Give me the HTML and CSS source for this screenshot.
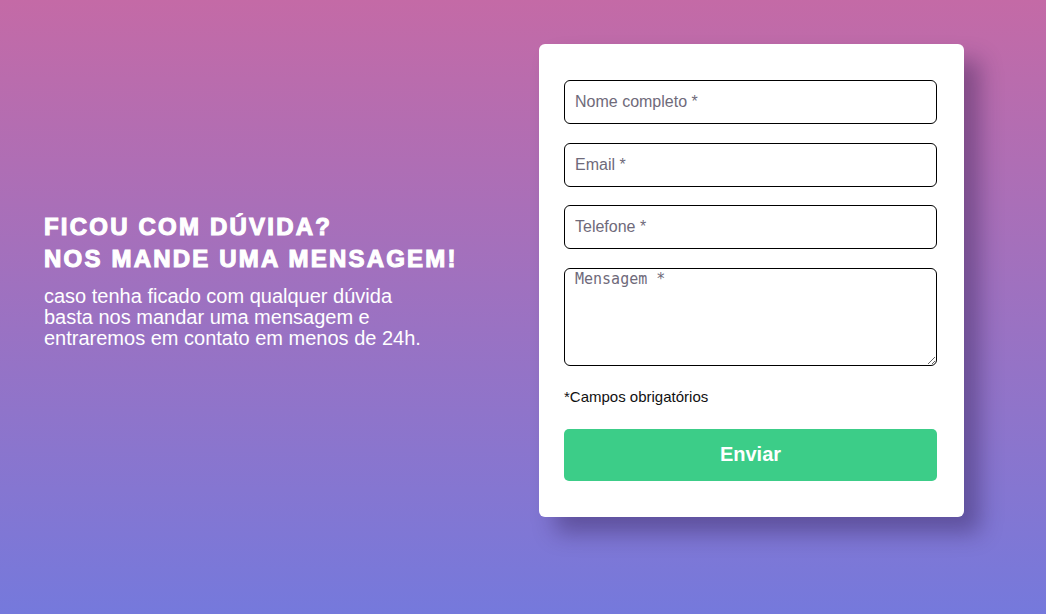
FILE: index.html
```html
<!DOCTYPE html>
<html lang="pt-BR">
<head>
<meta charset="utf-8">
<title>Contato</title>
<link rel="stylesheet" href="styles.css">
</head>
<body>
<main class="page">
  <section class="intro">
    <h1 class="intro-title">FICOU COM DÚVIDA?<br>NOS MANDE UMA MENSAGEM!</h1>
    <p class="intro-text">caso tenha ficado com qualquer dúvida<br>basta nos mandar uma mensagem e<br>entraremos em contato em menos de 24h.</p>
  </section>
  <form class="card">
    <input class="field" type="text" placeholder="Nome completo *">
    <input class="field" type="email" placeholder="Email *">
    <input class="field" type="tel" placeholder="Telefone *">
    <textarea class="field field-area" placeholder="Mensagem *"></textarea>
    <p class="note">*Campos obrigatórios</p>
    <button class="submit" type="button">Enviar</button>
  </form>
</main>
</body>
</html>
```

FILE: styles.css
```css
* { box-sizing: border-box; }

html, body {
  margin: 0;
  height: 100%;
}

body {
  background: linear-gradient(to bottom, #c46aa6 0%, #7579dc 100%);
  font-family: "Liberation Sans", Arial, sans-serif;
  overflow: hidden;
}

.page {
  display: grid;
  grid-template-columns: 495px 425px;
  align-items: center;
  padding: 44px 0 0 44px;
}

.intro {
  color: #fff;
}

.intro-title {
  margin: 0;
  font-size: 24px;
  line-height: 32px;
  font-weight: 900;
  letter-spacing: 2.2px;
  -webkit-text-stroke: 1.1px #fff;
}

.intro-text {
  margin: 11px 0 0;
  font-size: 20px;
  line-height: 21px;
}

.card {
  background: #fff;
  border-radius: 6px;
  padding: 36px 27px 36px 25px;
  box-shadow: 16px 16px 22px rgba(40, 20, 70, 0.38);
  display: flex;
  flex-direction: column;
}

.field {
  display: block;
  width: 100%;
  height: 44px;
  margin: 0 0 18.67px;
  padding: 0 10px;
  border: 1px solid #000;
  border-radius: 6px;
  font-family: "Liberation Sans", Arial, sans-serif;
  font-size: 16px;
  color: #222;
  background: #fff;
  outline: none;
}

.field::placeholder {
  color: #6f6a7a;
}

.field-area {
  height: 98px;
  margin: 0;
  padding: 1px 10px;
  font-family: "DejaVu Sans Mono", monospace;
  font-size: 15px;
  resize: vertical;
}

.note {
  margin: 22px 0 0;
  font-size: 15px;
  line-height: 17px;
  color: #111;
}

.submit {
  display: block;
  width: 100%;
  height: 52px;
  margin-top: 24px;
  border: 0;
  border-radius: 5px;
  background: #3ccd88;
  color: #fff;
  font-family: "Liberation Sans", Arial, sans-serif;
  font-size: 20px;
  font-weight: 700;
  cursor: pointer;
}
```
